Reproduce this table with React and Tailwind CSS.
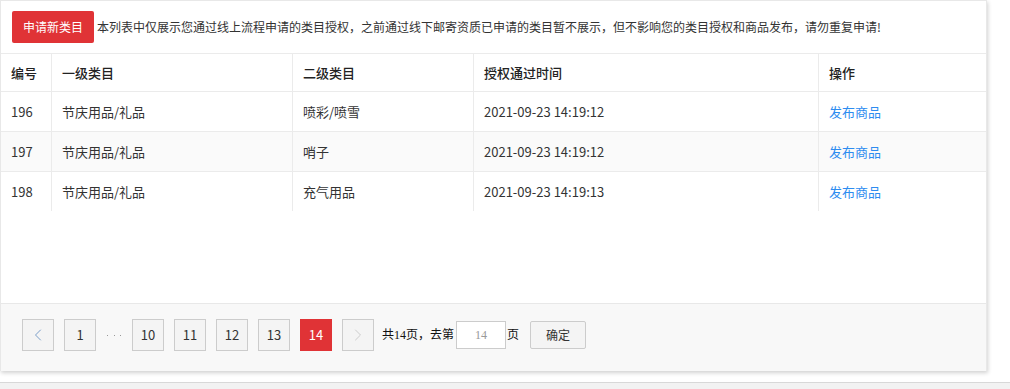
import { ChevronLeft, ChevronRight } from "lucide-react";

const rows = [
  { id: 196, first: "节庆用品/礼品", second: "喷彩/喷雪", time: "2021-09-23 14:19:12" },
  { id: 197, first: "节庆用品/礼品", second: "哨子", time: "2021-09-23 14:19:12" },
  { id: 198, first: "节庆用品/礼品", second: "充气用品", time: "2021-09-23 14:19:13" },
];

const cols = ["w-[50px]", "w-[241px]", "w-[181px]", "w-[345px]", "flex-1"];

function Row({ cells, className = "" }) {
  return (
    <div className={`flex items-stretch ${className}`}>
      {cells.map((c, i) => (
        <div
          key={i}
          className={`${cols[i]} flex items-center pl-[10px] ${i > 0 ? "border-l border-[#ebebeb]" : ""}`}
        >
          {c}
        </div>
      ))}
    </div>
  );
}

function PageButton({ children, active, className = "" }) {
  return (
    <button
      type="button"
      className={`flex h-8 w-8 items-center justify-center border text-[13px] ${
        active ? "border-[#e03336] bg-[#e03336] text-white" : "border-[#cccccc] bg-[#f4f4f4] text-[#333]"
      } ${className}`}
    >
      {children}
    </button>
  );
}

export default function App() {
  return (
    <div className="h-[389px] w-[1010px] overflow-hidden bg-white font-['Noto_Sans_CJK_SC','Noto_Sans',sans-serif] text-[13px] text-[#333]">
      <div className="flex h-[371px] w-[987px] flex-col border border-b-0 border-[#e8e8e8] bg-white shadow-[1px_2px_4px_rgba(0,0,0,0.18)]">
        {/* notice bar */}
        <div className="flex h-[53px] shrink-0 items-start gap-[3px] border-b border-[#ebebeb] pl-[11px] pt-[10px]">
          <button
            type="button"
            className="h-8 rounded-[2px] bg-[#e03336] px-[11px] text-[12px] text-white"
          >
            申请新类目
          </button>
          <span className="text-[12px] leading-8 text-[#333]">
            本列表中仅展示您通过线上流程申请的类目授权，之前通过线下邮寄资质已申请的类目暂不展示，但不影响您的类目授权和商品发布，请勿重复申请!
          </span>
        </div>

        {/* table */}
        <div className="h-[249px] shrink-0">
          <Row
            className="h-[38px] border-b border-[#ebebeb] font-medium text-[#222]"
            cells={["编号", "一级类目", "二级类目", "授权通过时间", "操作"]}
          />
          {rows.map((r, i) => (
            <Row
              key={r.id}
              className={`h-10 ${i < rows.length - 1 ? "border-b border-[#ebebeb]" : "h-[39px]"} ${
                i === 1 ? "bg-[#fafafa]" : ""
              }`}
              cells={[
                r.id,
                r.first,
                r.second,
                r.time,
                <a key="a" className="text-[#2d8cf0]">
                  发布商品
                </a>,
              ]}
            />
          ))}
        </div>

        {/* pagination */}
        <div className="flex h-[68px] items-start border-t border-[#e8e8e8] bg-[#f8f8f8] pl-[21px] pt-[15px]">
          <div className="flex items-center gap-[10px]">
            <PageButton>
              <ChevronLeft className="h-5 w-5 text-[#6f95c4]" strokeWidth={1.1} />
            </PageButton>
            <PageButton>1</PageButton>
            <span className="flex w-[16px] justify-between px-[1px]">
              <i className="h-[1px] w-[1px] bg-[#999]" />
              <i className="h-[1px] w-[1px] bg-[#999]" />
              <i className="h-[1px] w-[1px] bg-[#999]" />
            </span>
            <PageButton>10</PageButton>
            <PageButton>11</PageButton>
            <PageButton>12</PageButton>
            <PageButton>13</PageButton>
            <PageButton active>14</PageButton>
            <PageButton>
              <ChevronRight className="h-5 w-5 text-[#c8c8c8]" strokeWidth={1.1} />
            </PageButton>
          </div>
          <div className="ml-[8px] flex h-8 items-center font-['Liberation_Serif','Noto_Sans_CJK_SC',serif] text-[12px] text-[#111]">
            <span>共14页，去第</span>
            <input
              readOnly
              value="14"
              className="ml-[2px] h-[28px] w-[50px] border border-[#cccccc] bg-white text-center text-[12px] text-[#999] outline-none"
            />
            <span className="ml-[1px]">页</span>
            <button
              type="button"
              className="ml-[11px] h-[28px] w-[56px] rounded-[2px] border border-[#cccccc] bg-[#f4f4f4] font-['Noto_Sans_CJK_SC',sans-serif] text-[12px] text-[#333]"
            >
              确定
            </button>
          </div>
        </div>
      </div>
      <div className="mt-[11px] h-[20px] border-t border-[#d8d8d8] bg-[#f2f2f2]" />
    </div>
  );
}
